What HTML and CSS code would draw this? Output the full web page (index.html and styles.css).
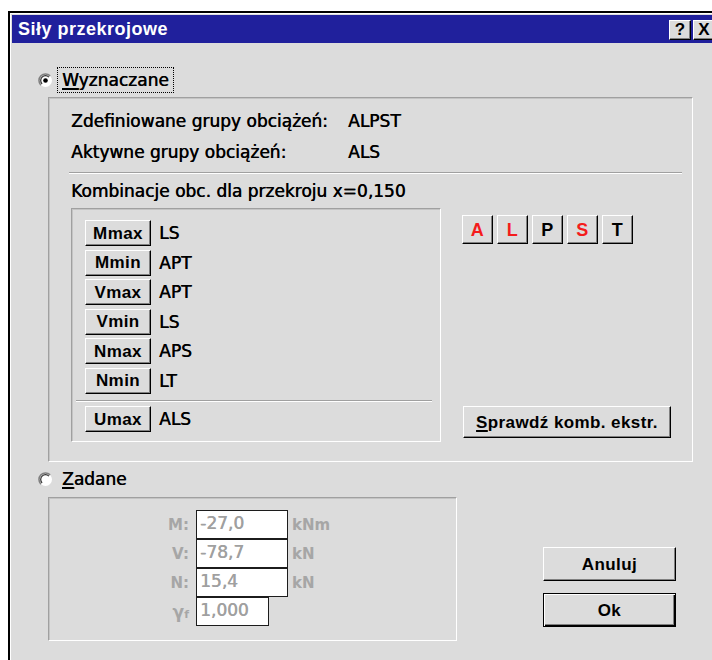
FILE: index.html
```html
<!DOCTYPE html>
<html lang="pl">
<head>
<meta charset="utf-8">
<title>Siły przekrojowe</title>
<link rel="stylesheet" href="styles.css">
</head>
<body>
<div class="window">
  <div class="titlebar">
    <span class="title">Siły przekrojowe</span>
    <div class="tbtns">
      <span class="bevel tbtn">?</span>
      <span class="bevel tbtn">X</span>
    </div>
  </div>

  <div class="client">
    <div class="radio-row">
      <svg class="radio" width="15" height="15" viewBox="0 0 15 15">
        <circle cx="7.5" cy="7.5" r="6.5" fill="#fff"/>
        <path d="M2.9 12.1 A6.5 6.5 0 0 1 12.1 2.9" fill="none" stroke="#808080" stroke-width="1.6"/>
        <path d="M4.1 10.9 A4.8 4.8 0 0 1 10.9 4.1" fill="none" stroke="#303030" stroke-width="1.2"/>
        <circle cx="7.5" cy="7.5" r="2.3" fill="#000"/>
      </svg>
      <span class="radio-label focus"><u>W</u>yznaczane</span>
    </div>

    <div class="group g1">
      <div class="info">
        <span>Zdefiniowane grupy obciążeń:</span><span>ALPST</span>
        <span>Aktywne grupy obciążeń:</span><span>ALS</span>
      </div>
      <div class="sep sep-wide"></div>
      <div class="komb-title">Kombinacje obc. dla przekroju x=0,150</div>

      <div class="komb">
        <div class="group inner">
          <div class="combo-row"><button class="btn bevel combo-btn">Mmax</button><span class="val">LS</span></div>
          <div class="combo-row"><button class="btn bevel combo-btn">Mmin</button><span class="val">APT</span></div>
          <div class="combo-row"><button class="btn bevel combo-btn">Vmax</button><span class="val">APT</span></div>
          <div class="combo-row"><button class="btn bevel combo-btn">Vmin</button><span class="val">LS</span></div>
          <div class="combo-row"><button class="btn bevel combo-btn">Nmax</button><span class="val">APS</span></div>
          <div class="combo-row"><button class="btn bevel combo-btn">Nmin</button><span class="val">LT</span></div>
          <div class="sep sep-inner"></div>
          <div class="combo-row"><button class="btn bevel combo-btn">Umax</button><span class="val">ALS</span></div>
        </div>

        <div class="side">
          <div class="letters">
            <button class="btn bevel letter red">A</button>
            <button class="btn bevel letter red">L</button>
            <button class="btn bevel letter">P</button>
            <button class="btn bevel letter red">S</button>
            <button class="btn bevel letter">T</button>
          </div>
          <button class="btn bevel check"><u>S</u>prawdź komb. ekstr.</button>
        </div>
      </div>
    </div>

    <div class="bottom">
      <div class="left">
        <div class="radio-row low">
          <svg class="radio" width="15" height="15" viewBox="0 0 15 15">
            <circle cx="7.5" cy="7.5" r="6.5" fill="#fff"/>
            <path d="M2.9 12.1 A6.5 6.5 0 0 1 12.1 2.9" fill="none" stroke="#808080" stroke-width="1.6"/>
            <path d="M4.1 10.9 A4.8 4.8 0 0 1 10.9 4.1" fill="none" stroke="#303030" stroke-width="1.2"/>
          </svg>
          <span class="radio-label"><u>Z</u>adane</span>
        </div>

        <div class="group g2">
          <div class="fields">
            <span class="lbl">M:</span><span class="field">-27,0</span><span class="unit">kNm</span>
            <span class="lbl">V:</span><span class="field">-78,7</span><span class="unit">kN</span>
            <span class="lbl">N:</span><span class="field">15,4</span><span class="unit">kN</span>
            <span class="lbl gamma">γ<small>f</small></span><span class="field short">1,000</span><span class="unit"></span>
          </div>
        </div>
      </div>

      <div class="actions">
        <button class="btn bevel act">Anuluj</button>
        <button class="btn bevel act default">Ok</button>
      </div>
    </div>
  </div>
</div>
</body>
</html>
```

FILE: styles.css
```css
* {
  box-sizing: border-box;
}

html, body {
  overflow: hidden;
}

body {
  margin: 0;
  background: #fff;
  font-family: "DejaVu Sans", sans-serif;
  font-size: 17px;
  color: #000;
}

/* heavier strokes, like the old bitmap system font */
.client {
  text-shadow: 0.5px 0 0 currentColor;
}

u {
  text-decoration-thickness: 2px;
  text-underline-offset: 2px;
}

/* dialog frame */
.window {
  margin: 11px 0 0 8px;
  width: 714px;
  height: 660px;
  padding: 2px 2px 0 2px;
  background: #dcdcdc;
  border-top: 2px solid #000;
  border-left: 2px solid #000;
  box-shadow: inset 1px 1px 0 #fff;
}

.titlebar {
  height: 28px;
  background: #20209c;
  color: #fff;
  display: flex;
  align-items: center;
  justify-content: space-between;
  padding: 0 5px 0 6px;
}

.title {
  font: bold 18px "Liberation Sans", sans-serif;
  letter-spacing: 0.5px;
}

.tbtns {
  display: flex;
  gap: 2px;
  margin-top: 2px;
}

/* raised 3D edge shared by all push buttons */
.bevel {
  background: #dcdcdc;
  border: 1px solid;
  border-color: #fff #000 #000 #fff;
  box-shadow: inset -1px -1px 0 #808080;
}

.tbtn {
  width: 22px;
  height: 20px;
  display: flex;
  align-items: center;
  justify-content: center;
  font: bold 17px "Liberation Sans", sans-serif;
  color: #000;
}

.client {
  padding-top: 24px;
}

/* radio options */
.radio-row {
  display: flex;
  align-items: center;
  gap: 4px;
  height: 26px;
  padding-left: 26px;
}

.radio-row.low {
  margin-top: 5px;
  height: 24px;
}

.radio {
  flex: none;
}

.radio-label {
  border: 1px dotted transparent;
  padding: 0 4px;
  line-height: 24px;
}

.radio-label.focus {
  border-color: #000;
}

/* etched group boxes */
.group {
  border: 1px solid;
  border-color: #a0a0a0 #fff #fff #a0a0a0;
  box-shadow: inset 1px 1px 0 #c4c4c4;
}

.g1 {
  margin: 4px 0 0 36px;
  width: 645px;
  padding: 8px 10px 19px 22px;
}

.info {
  display: grid;
  grid-template-columns: 277px auto;
  line-height: 31px;
}

.sep {
  border-top: 1px solid #a0a0a0;
  border-bottom: 1px solid #fff;
}

.sep-wide {
  margin: 4px 0 0 -2px;
}

.komb-title {
  margin-top: 7px;
  line-height: 20px;
}

.komb {
  margin-top: 7px;
  display: flex;
}

.inner {
  width: 370px;
  padding: 11px 8px 9px 13px;
}

.combo-row {
  display: flex;
  align-items: center;
  height: 26px;
}

.combo-row + .combo-row {
  margin-top: 3.5px;
}

.sep-inner {
  margin: 6.5px 0 4px -9px;
}

.btn {
  font: bold 17px/1 "Liberation Sans", sans-serif;
  letter-spacing: 0.4px;
  color: #000;
  padding: 0;
  display: flex;
  align-items: center;
  justify-content: center;
  text-shadow: none;
}

.combo-btn {
  width: 66px;
  height: 26px;
}

.val {
  margin-left: 8px;
}

.side {
  margin-left: 21px;
  display: flex;
  flex-direction: column;
  justify-content: space-between;
  padding: 7px 0 4px 0;
}

.letters {
  display: flex;
  gap: 4px;
}

.letter {
  width: 31px;
  height: 29px;
  font-size: 18px;
}

.red {
  color: #f41c1c;
}

.check {
  width: 208px;
  height: 32px;
  margin-left: 1px;
}

/* lower part: manual values and dialog actions */
.bottom {
  display: flex;
}

.g2 {
  margin: 6px 0 0 36px;
  width: 409px;
  height: 144px;
  padding-top: 12px;
}

.fields {
  display: grid;
  grid-template-columns: 147px 92px auto;
  grid-auto-rows: 29px;
}

.lbl,
.unit {
  font: bold 15px "DejaVu Sans", sans-serif;
  color: #a6a6a6;
  align-self: center;
  text-shadow: none;
}

.lbl {
  text-align: right;
  padding-right: 7px;
}

.gamma {
  font-size: 17px;
}

.lbl small {
  font-size: 11px;
}

.unit {
  padding-left: 4px;
}

.field {
  background: #fff;
  border: 1px solid #1c1c1c;
  color: #a0a0a0;
  padding-left: 3px;
  line-height: 25px;
}

.field.short {
  width: 73px;
}

.actions {
  margin-left: 86px;
  padding-top: 85px;
  display: flex;
  flex-direction: column;
  gap: 12px;
}

.act {
  width: 133px;
  height: 34px;
}

.default {
  border: 1px solid #000;
  box-shadow: inset 1px 1px 0 #fff, inset -1px -1px 0 #000, inset -2px -2px 0 #808080;
}
```
